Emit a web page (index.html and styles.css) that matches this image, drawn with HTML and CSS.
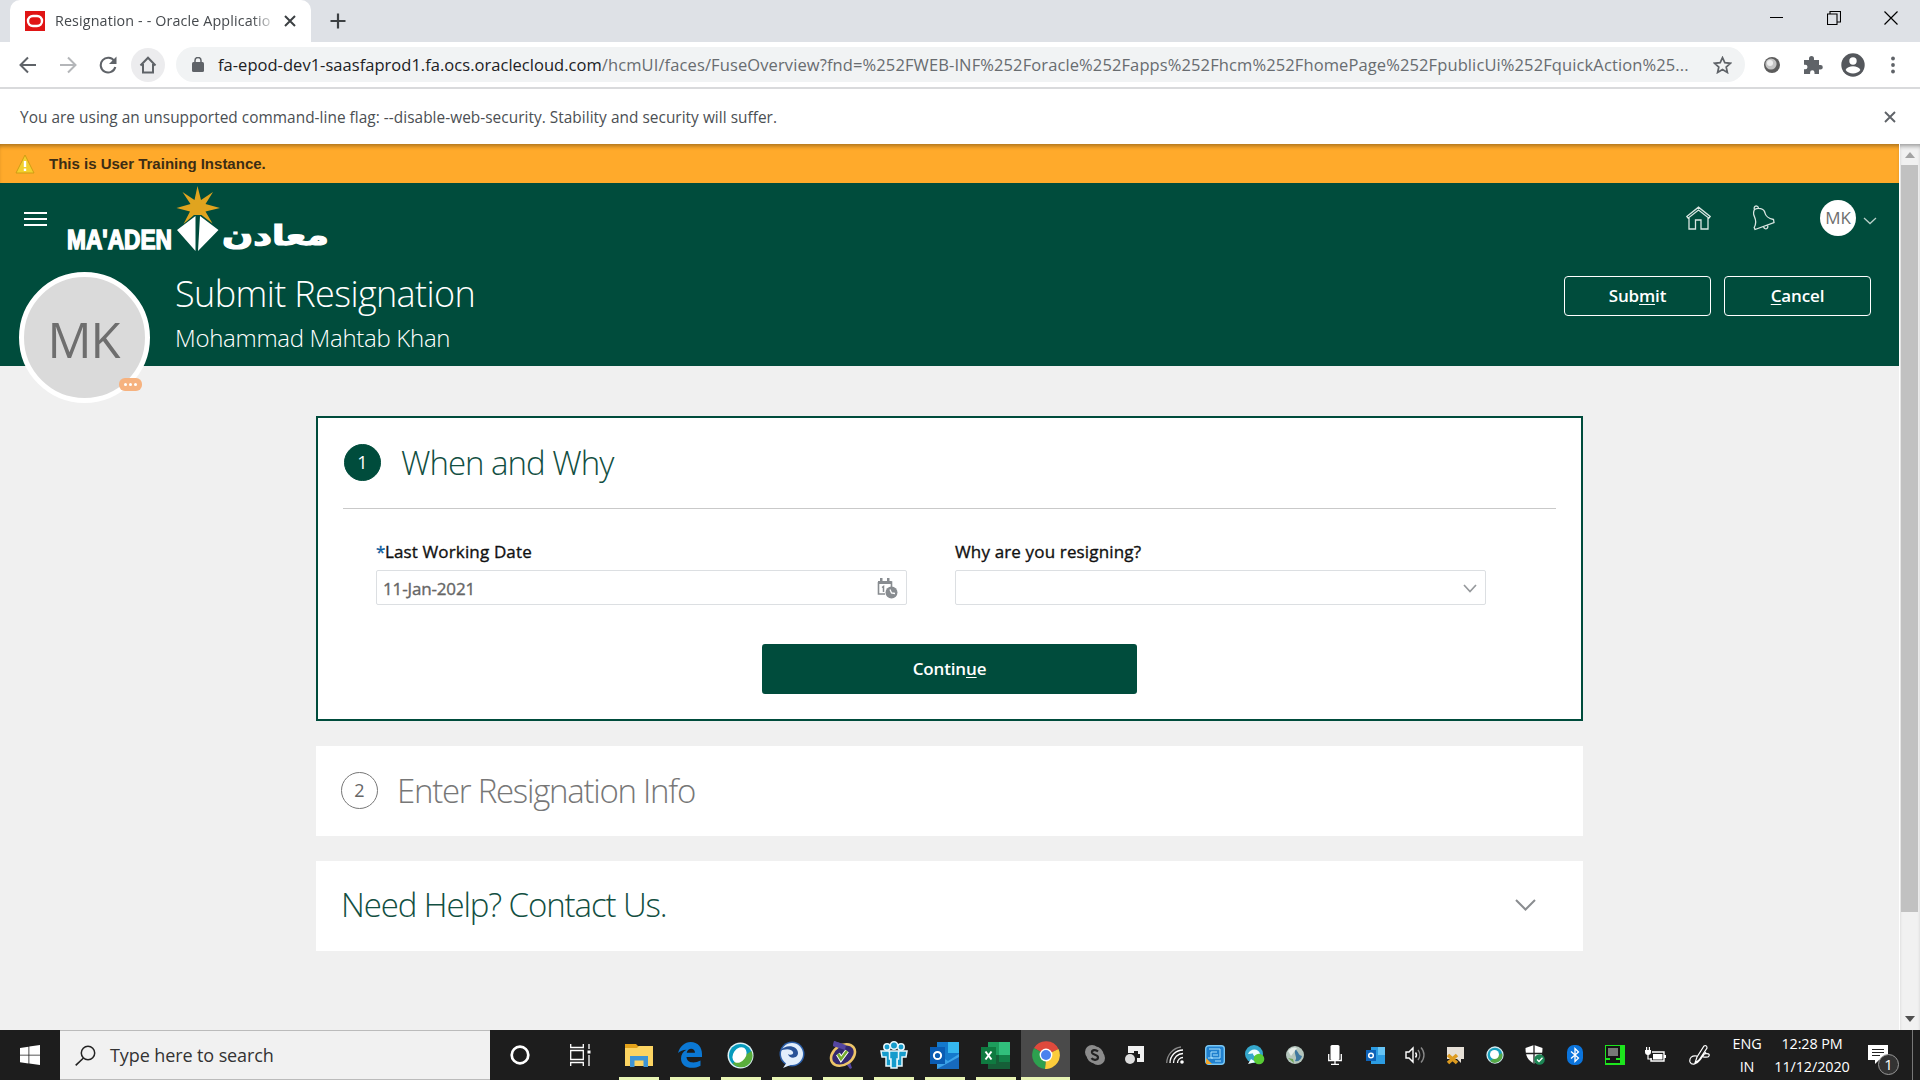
FILE: index.html
```html
<!DOCTYPE html>
<html lang="en">
<head>
<meta charset="utf-8">
<title>Resignation - - Oracle Applications</title>
<link rel="stylesheet" href="styles.css">
</head>
<body>
<div class="tabstrip">
  <div class="tab">
    <svg class="favicon" width="20" height="20" viewBox="0 0 20 20"><rect width="20" height="20" fill="#e01515"/><rect x="3" y="5" width="14" height="10" rx="5" fill="none" stroke="#fff" stroke-width="2.4"/></svg>
    <span class="tab-title">Resignation - - Oracle Applicatio</span>
    <svg width="12" height="12" viewBox="0 0 12 12"><path d="M1 1l10 10M11 1L1 11" stroke="#3c4043" stroke-width="2"/></svg>
  </div>
  <svg class="newtab" width="16" height="16" viewBox="0 0 16 16"><path d="M8 .5v15M.5 8h15" stroke="#3c4043" stroke-width="2.2"/></svg>
  <div class="window-controls">
    <svg width="14" height="14" viewBox="0 0 14 14"><path d="M0 6.5h13" stroke="#000"/></svg>
    <svg width="14" height="14" viewBox="0 0 14 14"><path d="M.5 3h9.500v10.500H.5zM3 3V.5h10.500V11H10" fill="none" stroke="#000" stroke-width="1.100"/></svg>
    <svg width="14" height="14" viewBox="0 0 14 14"><path d="M.5.5l13 13M13.500.5l-13 13" stroke="#000" stroke-width="1.200"/></svg>
  </div>
</div>
<div class="toolbar">
  <div class="nav">
    <span class="nav-btn"><svg width="18" height="18" viewBox="0 0 18 18"><path d="M17 9H2M9 1.500L1.500 9 9 16.500" fill="none" stroke="#5f6368" stroke-width="2"/></svg></span>
    <span class="nav-btn"><svg width="18" height="18" viewBox="0 0 18 18"><path d="M1 9h15M9 1.500L16.500 9 9 16.500" fill="none" stroke="#b4b6b9" stroke-width="2"/></svg></span>
    <span class="nav-btn"><svg width="18" height="18" viewBox="0 0 18 18"><path d="M15.300 5A7.400 7.400 0 1 0 16.300 11" fill="none" stroke="#5f6368" stroke-width="2.100"/><path d="M17.500.5v7.500H10z" fill="#5f6368"/></svg></span>
    <span class="nav-btn nav-home"><svg width="18" height="18" viewBox="0 0 18 18"><path d="M1.500 9.500L9 1.700l7.500 7.800M4 8v8.500h10V8" fill="none" stroke="#5f6368" stroke-width="2"/></svg></span>
  </div>
  <div class="omnibox">
    <svg width="12" height="15" viewBox="0 0 12 15"><rect y="5" width="12" height="10" rx="1.500" fill="#5f6368"/><path d="M3 6V3.500a3 3 0 0 1 6 0V6" fill="none" stroke="#5f6368" stroke-width="1.500"/></svg>
    <span class="url"><b>fa-epod-dev1-saasfaprod1.fa.ocs.oraclecloud.com</b>/hcmUI/faces/FuseOverview?fnd=%252FWEB-INF%252Foracle%252Fapps%252Fhcm%252FhomePage%252FpublicUi%252FquickAction%25...</span>
    <svg width="19" height="18" viewBox="0 0 19 18"><path d="M9.500 1.600l2.300 5.100 5.600.6-4.200 3.700 1.200 5.500-4.900-2.900-4.900 2.900 1.200-5.500L1.600 7.300l5.600-.6z" fill="none" stroke="#5f6368" stroke-width="1.700"/></svg>
  </div>
  <div class="extensions">
    <svg width="18" height="18" viewBox="0 0 18 18"><circle cx="9" cy="9" r="8" fill="#5c5c5c"/><circle cx="8" cy="8" r="5.600" fill="#c4c4c4"/><circle cx="7" cy="7" r="3" fill="#eee"/></svg>
    <svg width="20" height="20" viewBox="0 0 20 20"><path d="M1 5h5V3.500a2.500 2.500 0 0 1 5 0V5h5v5h1.500a2.300 2.300 0 0 1 0 4.600H16V19h-4.500v-1.500a2.200 2.200 0 0 0-4.400 0V19H1v-4.800h1.300a2.200 2.200 0 0 0 0-4.400H1z" fill="#5f6368"/></svg>
    <svg class="profile" width="24" height="24" viewBox="0 0 24 24"><circle cx="12" cy="12" r="11.700" fill="#54575c"/><circle cx="12" cy="8" r="3.700" fill="#fff"/><path d="M4.600 17c2-5 12.800-5 14.800 0-3 4.500-11.800 4.500-14.800 0z" fill="#fff"/></svg>
    <svg width="4" height="18" viewBox="0 0 4 18"><circle cx="2" cy="2.500" r="1.900" fill="#5f6368"/><circle cx="2" cy="9" r="1.900" fill="#5f6368"/><circle cx="2" cy="15.500" r="1.900" fill="#5f6368"/></svg>
  </div>
</div>
<div class="infobar">
  <span class="info-text">You are using an unsupported command-line flag: --disable-web-security. Stability and security will suffer.</span>
  <svg width="12" height="12" viewBox="0 0 12 12"><path d="M1 1l10 10M11 1L1 11" stroke="#5f6368" stroke-width="1.900"/></svg>
</div>
<div class="viewport">
  <div class="page">
    <div class="notice">
      <svg width="20" height="20" viewBox="0 0 20 20"><path d="M10 1L19 19H1z" fill="#f3cf2c" stroke="#cf9d14" stroke-linejoin="round"/><path d="M10 7v6M10 14.500v2.500" stroke="#fff" stroke-width="2.400"/></svg>
      <span>This is User Training Instance.</span>
    </div>
    <header class="header">
      <div class="brandrow">
        <svg class="burger" width="24" height="16" viewBox="0 0 24 16"><path d="M0 2h23M0 8h23M0 14h23" stroke="#fff" stroke-width="2"/></svg>
        <svg class="logo" width="270" height="80" viewBox="0 0 270 80">
          <text class="logo-latin" x="1" y="64" textLength="105" lengthAdjust="spacingAndGlyphs">MA'ADEN</text>
          <path d="M131.500 1l3.500 14 12-8-7.500 12 14.500 4-14.500 3.500 7 12-11-8.500h-7.500l-10.500 9 6.500-12.500-13.500-3.500 14-4-8-12 12 8z" fill="#e0a41f"/>
          <path d="M129.500 31v35L111 45zM134 31l18.500 14L132 66z" fill="#fff"/>
          <text class="logo-arabic" x="156" y="60" textLength="107" lengthAdjust="spacingAndGlyphs">معادن</text>
        </svg>
        <div class="global">
          <svg width="25" height="24" viewBox="0 0 25 24"><path d="M.8 10.500L12.500 1.200l11.700 9.300-1.300 1.700L12.500 4 2.100 12.200zM3 12v11h6.500v-9h5.500v9H22V12" fill="none" stroke="#d9e6e2" stroke-width="1.300"/></svg>
          <svg width="22" height="26" viewBox="0 0 22 26"><path d="M1.500 4.500C5 2.500 11 3 12 8c.7 4 4 5.500 8.500 6.500l.5 3L2 24.500l-.8-2C4.500 17 2 13 1 10.500 0 8 .5 6.500 1.500 4.500zM1.500 4.500C0 1 4.500-.5 5.500 3M10.500 21.500c1 4 5.500 2.500 4-1.500" fill="none" stroke="#d9e6e2" stroke-width="1.300"/></svg>
          <span class="user">MK</span>
          <svg class="user-caret" width="14" height="8" viewBox="0 0 14 8"><path d="M1 1l6 5.500L13 1" fill="none" stroke="#b9d0c9" stroke-width="1.300"/></svg>
        </div>
      </div>
      <div class="titlerow">
        <div class="avatar">MK<span class="more"><i></i><i></i><i></i></span></div>
        <div class="titles">
          <h1>Submit Resignation</h1>
          <p>Mohammad Mahtab Khan</p>
        </div>
        <div class="actions">
          <button class="outline">Sub<u>m</u>it</button>
          <button class="outline"><u>C</u>ancel</button>
        </div>
      </div>
    </header>
    <main class="content">
      <section class="card active">
        <div class="card-head"><span class="step on">1</span><h2 class="h-when">When and Why</h2></div>
        <div class="fields">
          <label class="field"><span class="lbl"><em>*</em>Last Working Date</span>
            <span class="input"><span class="val">11-Jan-2021</span>
              <svg width="21" height="21" viewBox="0 0 21 21"><path d="M1.500 4h13v5M1.500 4v12H8" fill="none" stroke="#888c90" stroke-width="1.600"/><path d="M1 3h13.500v3H1zM3 0h2.500v4H3zM10 0h2.500v4H10z" fill="#888c90"/><path d="M5 9.500l1.500-1V14" fill="none" stroke="#888c90" stroke-width="1.500"/><circle cx="14.500" cy="14.500" r="6" fill="#888c90"/><path d="M13 11.500l1.500 3.500 3.500.5" fill="none" stroke="#fff" stroke-width="1.300"/></svg>
            </span></label>
          <label class="field"><span class="lbl">Why are you resigning?</span>
            <span class="input select"><svg width="14" height="9" viewBox="0 0 14 9"><path d="M1 1l6 6.500L13 1" fill="none" stroke="#96999c" stroke-width="1.700"/></svg></span></label>
        </div>
        <button class="continue">Contin<u>u</u>e</button>
      </section>
      <section class="card pending"><span class="step">2</span><h2 class="h-info">Enter Resignation Info</h2></section>
      <section class="card help"><h2 class="h-help">Need Help? Contact Us.</h2>
        <svg width="21" height="12" viewBox="0 0 21 12"><path d="M1 1l9.500 9.500L20 1" fill="none" stroke="#8a8d90" stroke-width="2"/></svg></section>
    </main>
  </div>
  <div class="scrollbar">
    <svg width="10" height="6" viewBox="0 0 10 6"><path d="M0 6l5-6 5 6z" fill="#a3a3a3"/></svg>
    <div class="thumb"></div>
    <svg class="down" width="10" height="6" viewBox="0 0 10 6"><path d="M0 0l5 6 5-6z" fill="#505050"/></svg>
  </div>
</div>
<footer class="taskbar">
  <div class="start"><svg width="20" height="20" viewBox="0 0 20 20"><path d="M0 3l8.500-1.300v8H0zM9.300 1.600L20 0v9.700H9.300zM0 10.500h8.500v8L0 17.200zM9.300 10.500H20V20L9.300 18.600z" fill="#fff"/></svg></div>
  <div class="search">
    <svg width="21" height="21" viewBox="0 0 21 21"><circle cx="13" cy="8" r="6.700" fill="none" stroke="#222" stroke-width="1.500"/><path d="M8.500 13L.7 20.300" stroke="#222" stroke-width="1.600"/></svg>
    <span>Type here to search</span>
  </div>
  <div class="sys"><svg width="20" height="20" viewBox="0 0 20 20"><circle cx="10" cy="10" r="8.300" fill="none" stroke="#fff" stroke-width="2.700"/></svg></div>
  <div class="sys view"><svg width="21" height="22" viewBox="0 0 21 22"><path d="M.7 0v3.500h12.600V0M.7 22v-3.500h12.600V22M.7 6.500h12.600v9H.7zM19 0v5M19 11v11" fill="none" stroke="#fff" stroke-width="1.300"/><path d="M17.500 6.500h3v3h-3z" fill="#fff"/></svg></div>
  <div class="apps">
    <div class="app"><svg width="28" height="24" viewBox="0 0 28 24"><path d="M0 1h11l2 2h15v20H0z" fill="#e3a21a"/><path d="M0 5h12l2-2h14v20H0z" fill="#fcd462"/><path d="M5 24V13h18v11h-4.500v-6.500h-9V24z" fill="#3d94d6"/></svg></div>
    <div class="app"><svg width="26" height="26" viewBox="0 0 26 26"><path d="M1 11C3 4 8 0 13.500 0 21 0 25 5.500 25 12v3H9.500c.5 6.500 8.500 6.500 14 3.500v5.200C14 28.500 4 25 4 16.500c0-4 2.200-7 5.500-8.700C6 8 3 9 1 11zm8.700-.2H18c0-5.300-7.300-5.500-8.300 0z" fill="#0b78d4"/></svg></div>
    <div class="app"><svg width="27" height="27" viewBox="0 0 27 27"><circle cx="13.500" cy="13.500" r="13" fill="#dff3f8"/><circle cx="13.500" cy="13.500" r="11.500" fill="#079bbd"/><path d="M24.500 9a11.500 11.500 0 0 1-19 12.500z" fill="#5aae3c"/><ellipse cx="12.500" cy="13" rx="6.300" ry="8.500" transform="rotate(35 12.500 13)" fill="#fff"/></svg></div>
    <div class="app"><svg width="28" height="28" viewBox="0 0 28 28"><circle cx="14" cy="13" r="12.500" fill="#2c5fa8"/><circle cx="14" cy="13" r="11" fill="#e2eefb"/><path d="M2 10C8 2 20 5 20 12c0 6-9 6-10 1 3 2 6 0 5-2-2-4-9-3-13-1z" fill="#285297"/><path d="M9 21l-4 6 10-4z" fill="#e2eefb"/></svg></div>
    <div class="app"><svg width="28" height="28" viewBox="0 0 28 28"><path d="M5 0l12 4-1 6L4 5zM15 20l6 8 2-1-3-9z" fill="#5546a0"/><ellipse cx="14" cy="14" rx="13" ry="9.500" transform="rotate(-35 14 14)" fill="#33286f" stroke="#edc569" stroke-width="2.600"/><path d="M5 0l12 4-1 5L4 5z" fill="#5546a0"/><path d="M9 13l3 5 6-8" fill="none" stroke="#fff" stroke-width="4.500"/><path d="M9 13l3 5 6-8" fill="none" stroke="#75ac2f" stroke-width="2.600"/></svg></div>
    <div class="app"><svg width="28" height="28" viewBox="0 0 28 28"><g fill="#169ccc" stroke="#e8f7fc" stroke-width="1.500"><circle cx="7" cy="6" r="3.200"/><circle cx="21" cy="6" r="3.200"/><path d="M1 10h8l2 5v10H6v-9H2zM27 10h-8l-2 5v10h5v-9h4z"/><circle cx="14" cy="4.500" r="3.700"/><path d="M9.500 10h9v8h-1.500v9h-6v-9H9.500z"/></g></svg></div>
    <div class="app"><svg width="29" height="27" viewBox="0 0 29 27"><path d="M7 0h22v23H7z" fill="#1479cc"/><path d="M18 0h11v11H18z" fill="#35b7ef"/><path d="M7 12l11 7 11-7v15H7z" fill="#3ba3e8"/><path d="M7 27l22-12v12z" fill="#1769bc"/><path d="M0 5h15v17H0z" fill="#0a5cb3"/><circle cx="7.500" cy="13.500" r="3.600" fill="none" stroke="#fff" stroke-width="2"/></svg></div>
    <div class="app"><svg width="29" height="27" viewBox="0 0 29 27"><path d="M7 0h22v27H7z" fill="#1d9c5c"/><path d="M18 0h11v13H18z" fill="#31bf7c"/><path d="M7 13h22v14H7z" fill="#165f38"/><path d="M18 13h11v7H18z" fill="#128048"/><path d="M0 5h15v17H0z" fill="#0f7a40"/><path d="M4.500 9.500l6 8M10.500 9.500l-6 8" stroke="#fff" stroke-width="2"/></svg></div>
    <div class="app current"><svg width="28" height="28" viewBox="0 0 28 28"><path d="M14 14L2 7a14 14 0 0 1 24.500 1z" fill="#de4a3c"/><path d="M14 14L26.500 8A14 14 0 0 1 13 28z" fill="#fbcc3b"/><path d="M14 14l-1 14A14 14 0 0 1 2 7z" fill="#2da04f"/><circle cx="14" cy="14" r="6.400" fill="#fff"/><circle cx="14" cy="14" r="5" fill="#4a82ee"/></svg></div>
  </div>
  <div class="tray">
    <span><svg width="20" height="20" viewBox="0 0 20 20"><circle cx="7" cy="7" r="7" fill="#8c8c8c"/><circle cx="13" cy="13" r="7" fill="#8c8c8c"/><circle cx="10" cy="10" r="8.500" fill="#8c8c8c"/><path d="M13 6.500C10.500 4 6.500 5 7 7.700c.6 2.600 6 1.600 6 4.800-.2 3-5 3-6.500.7" fill="none" stroke="#222" stroke-width="2.200"/></svg></span>
    <span><svg width="20" height="20" viewBox="0 0 20 20"><path d="M3 1h16v16h-7v-4h3V9h-2V6H9v2H3z" fill="#f1f1f1"/><circle cx="5" cy="14" r="5" fill="#ddd"/></svg></span>
    <span><svg width="18" height="18" viewBox="0 0 18 18"><g fill="none" stroke="#fff" stroke-width="1.300"><path d="M11.500 17a5.500 5.500 0 0 1 5.500-5.500M7.500 17A9.500 9.500 0 0 1 17 7.500"/><path d="M4 17A13 13 0 0 1 17 4" /><path d="M.7 17A16.500 16.500 0 0 1 15 1" stroke="#888"/></g><circle cx="16" cy="16" r="1.800" fill="#fff"/></svg></span>
    <span><svg width="20" height="20" viewBox="0 0 20 20"><rect x=".7" y=".7" width="18.600" height="18.600" rx="3" fill="#2080ce" stroke="#78c6f3" stroke-width="1.400"/><path d="M4 4h11v9H6V7h6M8 10h5M3 13h5M10 16h6" fill="none" stroke="#a9e2ff" stroke-width="1"/><path d="M1 13l6 6H1z" fill="#f3a82f"/></svg></span>
    <span><svg width="20" height="20" viewBox="0 0 20 20"><circle cx="9" cy="9" r="9" fill="#35a7cc"/><path d="M3 9c2-6 11-6 12 0-2 5-7 2-7 0 0-1 2-2 4-1M3 19l3-5 5 3z" fill="#eefcff"/><circle cx="14" cy="14" r="5.300" fill="#58cb35"/></svg></span>
    <span><svg width="20" height="20" viewBox="0 0 20 20"><circle cx="10" cy="10" r="9" fill="#b5c6bd"/><path d="M10 4c4 3 3 6 7 7-1 4-4 6-7 5 3-4-1-5 0-12z" fill="#3f789f"/><path d="M3 6c3-4 7-4 9-3L6 11z" fill="#e4ebe7"/><path d="M3 13l5 1 1 4z" fill="#6fa654"/></svg></span>
    <span><svg width="14" height="20" viewBox="0 0 14 20"><rect x="2.500" width="9" height="15" rx="1.500" fill="#fff"/><path d="M.7 9v6.500h12.600V9M7 16v3.300M3 19.300h8" fill="none" stroke="#fff" stroke-width="1.300"/></svg></span>
    <span><svg width="19" height="17" viewBox="0 0 19 17"><path d="M5 0h14v17H5z" fill="#2c9ce2"/><path d="M12 0h7v8h-7z" fill="#65c4f5"/><path d="M0 3h10v11H0z" fill="#0d62b8"/><circle cx="5" cy="8.500" r="2.300" fill="none" stroke="#fff" stroke-width="1.500"/></svg></span>
    <span><svg width="21" height="18" viewBox="0 0 21 18"><g fill="none" stroke="#fff" stroke-width="1.400"><path d="M1 6h3l4-4v14l-4-4H1zM10.500 6.500a4 4 0 0 1 0 5"/><path d="M13 4a8 8 0 0 1 0 10M16 1.500a11 11 0 0 1 0 15" stroke="#888"/></g></svg></span>
    <span><svg width="19" height="19" viewBox="0 0 19 19"><path d="M1 1h17v12h-3v4l-4-4H1z" fill="#e6e0d7"/><path d="M2 9l9 8M11 9l-9 8" stroke="#dd9b20" stroke-width="3.600"/></svg></span>
    <span><svg width="18" height="18" viewBox="0 0 18 18"><circle cx="9" cy="9" r="8" fill="#18a0be" stroke="#d4eaf0" stroke-width="1.300"/><path d="M16 7a7.500 7.500 0 0 1-12 8z" fill="#56a847"/><circle cx="8.500" cy="8.500" r="4.500" fill="#fff"/></svg></span>
    <span><svg width="20" height="20" viewBox="0 0 20 20"><path d="M9 0l8.500 3c0 8-2 12-8.500 15.500C2.500 15 .5 11 .5 3z" fill="#fff"/><path d="M9 0v18M0 8.500h18" stroke="#222" stroke-width="1.300"/><circle cx="14.500" cy="14.500" r="5.300" fill="#1c8554"/><path d="M12 14.500l2 2 3.500-3.700" fill="none" stroke="#fff" stroke-width="1.300"/></svg></span>
    <span><svg width="16" height="20" viewBox="0 0 16 20"><rect width="16" height="20" rx="7" fill="#0b74dc"/><path d="M4 6.500l7.500 6.500L8 16.500v-13L11.500 7 4 13.500" fill="none" stroke="#fff" stroke-width="1.300"/></svg></span>
    <span><svg width="20" height="20" viewBox="0 0 20 20"><path d="M0 0h20v20H0z" fill="#1de51d"/><path d="M1 1h14v12H1zM5 13h6v2h4v3H1v-3h4z" fill="#151515"/><path d="M3 3h10v8H3z" fill="#777"/></svg></span>
    <span><svg width="21" height="16" viewBox="0 0 21 16"><path d="M7 5h12v9H6v-3" fill="none" stroke="#fff" stroke-width="1.400"/><path d="M8 7h9.500v5.500H8zM19 8h2v3h-2zM0 3h6v2a3 3 0 0 1-6 0zM1 0h1.200v3H1zM3.800 0H5v3H3.800z" fill="#fff"/><path d="M3 7v5h4" fill="none" stroke="#fff" stroke-width="1.200"/></svg></span>
  </div>
  <div class="ink"><svg width="21" height="21" viewBox="0 0 21 21"><path d="M8 11C3 10 0 13 1 17c2 4 7 2 10-2l6-8M6 18l2-6 7-11c2-1 3 0 3 2l-8 12zM15 9c4-1 6 0 5 2s-4 1-6 1" fill="none" stroke="#fff" stroke-width="1.200"/></svg></div>
  <div class="clock lang"><span>ENG</span><span>IN</span></div>
  <div class="clock time"><span>12:28 PM</span><span>11/12/2020</span></div>
  <div class="notif"><svg width="21" height="19" viewBox="0 0 21 19"><path d="M0 0h20v15h-9l-4 4v-4H0z" fill="#fff"/><path d="M4 4.500h12M4 7.500h12M4 10.500h8" stroke="#222" stroke-width="1.200"/></svg><span class="count">1</span></div>
  <div class="peek"></div>
</footer>
</body>
</html>
```
FILE: styles.css
```css
* { box-sizing: border-box; }
body { margin: 0; width: 1920px; height: 1080px; overflow: hidden; display: flex; flex-direction: column; background: #fff; font-family: "Open Sans", "Noto Sans", sans-serif; }
h1, h2, p { margin: 0; font-weight: 300; }
svg { display: block; flex: none; }
button { font-family: inherit; padding: 0 0 2px; }
span, h1, h2, p { white-space: nowrap; }

.tabstrip { height: 42px; background: #dee1e6; display: flex; align-items: flex-start; }
.tab { width: 301px; height: 42px; margin-left: 10px; padding: 0 15px; background: #fff; border-radius: 10px 10px 0 0; display: flex; align-items: center; }
.tab-title { width: 219px; margin: 0 10px 2px 10px; font-size: 14.3px; color: #45494d; letter-spacing: 0.13px; -webkit-mask-image: linear-gradient(90deg, #000 90%, transparent 101%); mask-image: linear-gradient(90deg, #000 90%, transparent 101%); }
.newtab { margin: 13px 0 0 19px; }
.window-controls { margin: 11px 22px 0 auto; display: flex; gap: 43px; }

.toolbar { height: 47px; border-bottom: 2px solid #d9dadc; display: flex; align-items: center; }
.nav { display: flex; margin-left: 11px; gap: 6px; }
.nav-btn { width: 34px; height: 34px; border-radius: 50%; display: flex; align-items: center; justify-content: center; }
.nav-home { background: #ececee; }
.omnibox { width: 1569px; height: 35px; margin-left: 11px; padding: 0 13px 0 16px; border-radius: 18px; background: #f1f3f4; display: flex; align-items: center; }
.url { flex: 1; margin-left: 14px; font-size: 16.5px; color: #686c70; letter-spacing: 0.11px; }
.url b { font-weight: 400; color: #202124; letter-spacing: 0.03px; }
.extensions { display: flex; align-items: center; margin-left: 18px; gap: 22px; }
.extensions .profile { margin-left: -4px; }
.extensions svg:last-child { margin-left: 4px; }

.infobar { height: 55px; padding: 0 24px 0 20px; display: flex; align-items: center; justify-content: space-between; font-size: 15.4px; letter-spacing: 0.035px; color: #4b4f53; }
.info-text { padding-top: 2px; }

.viewport { height: 886px; display: flex; }
.page { width: 1899px; background: #f0f0f0; }
.notice { height: 39px; padding: 0 15px; background: #ffaa2b; box-shadow: inset 0 4px 4px -2px #a8701c; display: flex; align-items: center; gap: 14px; font: bold 15px "Liberation Sans", Arial, sans-serif; color: #3c2d14; }
.header { height: 183px; background: #004c3c; color: #fff; }
.brandrow { height: 87px; display: flex; padding: 0 22px 0 24px; }
.burger { margin-top: 28px; }
.logo { margin: 2px 0 0 18px; }
.logo-latin { font: bold 27px "Liberation Sans", Arial, sans-serif; fill: #fff; stroke: #fff; stroke-width: 1.5px; }
.logo-arabic { font: bold 27px "DejaVu Sans", sans-serif; fill: #fff; stroke: #fff; stroke-width: 1.2px; }
.global { height: 36px; margin: 17px 0 0 auto; display: flex; align-items: center; }
.global svg:nth-child(2) { margin: 0 45px 0 42px; }
.user { width: 36px; height: 36px; margin-right: 7px; border-radius: 50%; background: #fff; color: #6e6e6e; font-size: 17px; line-height: 36px; text-align: center; letter-spacing: -0.1px; }
.user-caret { margin-top: 5px; }
.titlerow { display: flex; align-items: flex-start; padding: 0 28px 0 19px; }
.avatar { position: relative; width: 131px; height: 131px; margin-top: 2px; border: 5px solid #fff; border-radius: 50%; background: #dadada; color: #6e6e6e; font-size: 49px; line-height: 124px; text-align: center; letter-spacing: -1px; text-indent: -2px; }
.more { position: absolute; right: 3px; bottom: 7px; width: 23px; height: 13px; border-radius: 6px; background: #f6b27f; display: flex; align-items: center; justify-content: center; gap: 2px; }
.more i { width: 3px; height: 3px; border-radius: 50%; background: #fff; }
.titles { margin-left: 25px; }
.titles h1 { font-size: 36px; line-height: 48px; letter-spacing: -0.62px; }
.titles p { font-size: 24px; line-height: 34px; margin-top: 3px; letter-spacing: -0.3px; }
.actions { margin: 6px 0 0 auto; display: flex; gap: 13px; }
.outline { width: 147px; height: 40px; border: 1px solid #fff; border-radius: 4px; background: transparent; color: #fff; font-size: 17px; font-weight: 600; letter-spacing: -0.15px; }
u { text-underline-offset: 2px; text-decoration-thickness: 1px; }

.content { width: 1267px; margin-left: 316px; padding-top: 50px; display: flex; flex-direction: column; gap: 25px; }
.card { background: #fff; }
.active { height: 305px; border: 2px solid #004c3c; padding: 0 25px; }
.card-head { height: 91px; border-bottom: 1px solid #c9c9c9; display: flex; align-items: center; }
.card h2 { font-size: 33px; line-height: 44px; color: #124f42; }
.step { width: 37px; height: 37px; margin-bottom: 2px; border-radius: 50%; border: 1px solid #777; color: #666; font-size: 18px; line-height: 34px; text-align: center; }
.step.on { margin-left: 1px; background: #004c3c; border-color: #004c3c; color: #fff; }
.card .h-when { margin-left: 20px; letter-spacing: -1px; }
.fields { display: flex; gap: 48px; padding: 30px 0 0 33px; }
.field { width: 531px; }
.lbl { display: block; height: 31px; font-size: 17px; line-height: 26px; letter-spacing: 0.15px; color: #111; -webkit-text-stroke: 0.35px; }
.lbl em { font-style: normal; color: #0b5c9e; letter-spacing: -0.5px; }
.input { height: 35px; border: 1px solid #dcdfe2; border-radius: 2px; display: flex; align-items: center; justify-content: space-between; padding: 1px 8px 0 6px; font-size: 17px; letter-spacing: -0.15px; color: #666; -webkit-text-stroke: 0.35px; }
.select { justify-content: flex-end; }
.continue { display: block; width: 375px; height: 50px; margin: 39px auto 0; border: 0; border-radius: 3px; background: #004c3c; color: #fff; font-size: 17px; font-weight: 600; letter-spacing: -0.15px; }
.pending, .help { height: 90px; display: flex; align-items: center; padding: 0 47px 0 25px; }
.card .h-info { margin-left: 19px; color: #777; letter-spacing: -1.27px; }
.help { justify-content: space-between; padding-bottom: 3px; }
.card .h-help { letter-spacing: -1.1px; }

.scrollbar { width: 21px; padding: 8px 1px 8px 0; border-left: 1px solid #fff; background: #f1f1f1; display: flex; flex-direction: column; align-items: center; box-shadow: inset 0 4px 4px -2px #999; }
.thumb { width: 17px; height: 747px; margin-top: 7px; background: #c1c1c1; }
.down { margin-top: auto; }

.taskbar { height: 50px; background: #1d1d1d; display: flex; color: #fff; }
.taskbar > div { flex: none; }
.start, .sys, .app, .tray span, .ink { display: flex; align-items: center; justify-content: center; }
.start { width: 60px; }
.search { width: 430px; padding-left: 15px; background: #f1f1f1; border: 1px solid #bbb; border-width: 1px 0; display: flex; align-items: center; gap: 14px; font-size: 18px; letter-spacing: -0.1px; color: #333; }
.sys { width: 59px; }
.view { padding-left: 3px; }
.apps { display: flex; padding-left: 5px; }
.app { width: 51px; height: 50px; background: linear-gradient(#e8f4b4, #e8f4b4) center bottom / 40px 3px no-repeat; }
.app.current { width: 49px; background-color: #4a4a4a; background-size: 49px 3px; }
.tray { display: flex; margin-left: 5px; }
.tray span { width: 40px; }
.ink { width: 49px; }
.clock { display: flex; flex-direction: column; align-items: center; padding-top: 3px; font-size: 14.4px; line-height: 22.500px; letter-spacing: -0.1px; }
.lang { width: 46px; }
.time { width: 84px; }
.notif { position: relative; width: 58px; padding: 15px 0 0 14px; }
.count { position: absolute; left: 24px; top: 24px; width: 21px; height: 21px; border: 1px solid #999; border-radius: 50%; background: #333; font-size: 15px; line-height: 18px; text-align: center; }
.peek { width: 1px; background: #777; }
```
